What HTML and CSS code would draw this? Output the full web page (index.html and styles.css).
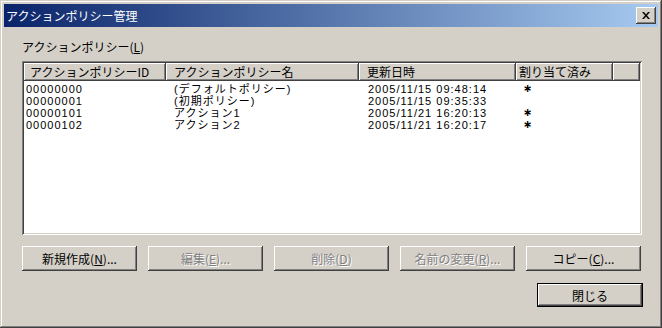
FILE: index.html
```html
<!DOCTYPE html>
<html lang="ja">
<head>
  <meta charset="UTF-8">
  <title>アクションポリシー管理</title>
  <link rel="stylesheet" href="styles.css">
</head>
<body>

  <div class="window">
    <!-- タイトルバー -->
    <div class="titlebar">
      <span class="title">アクションポリシー管理</span>
      <button class="close-btn" type="button">
        <svg width="8" height="7" viewBox="0 0 8 7">
          <path d="M0 0h2l2 2.5L6 0h2L5 3.5 8 7H6L4 4.5 2 7H0l3-3.5z" fill="#000"/>
        </svg>
      </button>
    </div>

    <div class="content">
      <div class="list-label">アクションポリシー(<u>L</u>)</div>

      <!-- 一覧 -->
      <div class="listbox">
        <div class="list-header">
          <div class="hcell">アクションポリシーID</div>
          <div class="hcell">アクションポリシー名</div>
          <div class="hcell">更新日時</div>
          <div class="hcell">割り当て済み</div>
          <div class="hcell"></div>
        </div>
        <div class="list-body">
          <div class="row">
            <span>00000000</span><span>(デフォルトポリシー)</span><span>2005/11/15 09:48:14</span><span class="mark">∗</span>
          </div>
          <div class="row">
            <span>00000001</span><span>(初期ポリシー)</span><span>2005/11/15 09:35:33</span><span class="mark"></span>
          </div>
          <div class="row">
            <span>00000101</span><span>アクション1</span><span>2005/11/21 16:20:13</span><span class="mark">∗</span>
          </div>
          <div class="row">
            <span>00000102</span><span>アクション2</span><span>2005/11/21 16:20:17</span><span class="mark">∗</span>
          </div>
        </div>
      </div>

      <!-- 操作ボタン -->
      <div class="actions">
        <button type="button" class="btn">新規作成(<u>N</u>)...</button>
        <button type="button" class="btn" disabled>編集(<u>E</u>)...</button>
        <button type="button" class="btn" disabled>削除(<u>D</u>)</button>
        <button type="button" class="btn" disabled>名前の変更(<u>R</u>)...</button>
        <button type="button" class="btn">コピー(<u>C</u>)...</button>
      </div>

      <div class="footer">
        <button type="button" class="btn btn-default">閉じる</button>
      </div>
    </div>
  </div>

</body>
</html>
```

FILE: styles.css
```css
* {
  box-sizing: border-box;
}
body {
  margin: 0;
  background-color: #d4d0c8;
  font-family: "Noto Sans CJK JP", sans-serif;
  font-size: 12px;
  color: #000;
}
.window {
  width: 662px;
  height: 328px;
  padding: 4px;
  background-color: #d4d0c8;
  box-shadow: inset -1px -1px #404040, inset 1px 1px #d4d0c8,
              inset -2px -2px #808080, inset 2px 2px #fff;
}
.titlebar {
  height: 23px;
  display: flex;
  align-items: center;
  justify-content: space-between;
  padding: 0 2px 0 2px;
  background: linear-gradient(to right, #0a246a, #a6caf0);
}
.title {
  color: #fff;
  font-size: 12px;
  line-height: 14px;
}
.close-btn {
  width: 20px;
  height: 17px;
  padding: 0;
  border: none;
  background-color: #d4d0c8;
  display: flex;
  align-items: center;
  justify-content: center;
  box-shadow: inset -1px -1px #404040, inset 1px 1px #fff,
              inset -2px -2px #808080, inset 2px 2px #d4d0c8;
}
.content {
  padding: 13px 16px 0 18px;
}
.list-label {
  line-height: 14px;
  height: 14px;
  margin-bottom: 7px;
}
.listbox {
  width: 620px;
  height: 174px;
  padding: 2px;
  background-color: #fff;
  box-shadow: inset 1px 1px #808080, inset -1px -1px #fff,
              inset 2px 2px #404040, inset -2px -2px #d4d0c8;
}
.list-header {
  display: grid;
  grid-template-columns: 142px 193px 157px 97px 1fr;
  height: 18px;
}
.hcell {
  background-color: #d4d0c8;
  line-height: 18px;
  padding-left: 6px;
  white-space: nowrap;
  overflow: hidden;
  box-shadow: inset -1px -1px #404040, inset 1px 1px #fff,
              inset -2px -2px #808080;
}
.hcell:nth-child(2),
.hcell:nth-child(3) {
  padding-left: 8px;
}
.hcell:nth-child(4) {
  padding-left: 3px;
}
.list-body {
  padding-top: 2px;
}
.row {
  display: grid;
  grid-template-columns: 142px 193px 157px 97px;
  height: 12px;
  line-height: 12px;
  font-family: "Liberation Sans", "Noto Sans CJK JP", sans-serif;
  font-size: 11px;
  letter-spacing: 1px;
}
.row span {
  padding-left: 2px;
  white-space: nowrap;
}
.row span:nth-child(2) {
  padding-left: 8px;
}
.row span:nth-child(3) {
  padding-left: 9px;
}
.row span:nth-child(4) {
  padding-left: 7px;
}
.row .mark {
  font-family: "DejaVu Sans", sans-serif;
  font-size: 11px;
  font-weight: bold;
}
.actions {
  display: flex;
  gap: 11px;
  margin-top: 11px;
  width: 620px;
}
.btn {
  width: 115px;
  height: 25px;
  padding: 0;
  border: none;
  font-family: inherit;
  font-size: 12px;
  color: #000;
  background-color: #d4d0c8;
  box-shadow: inset -1px -1px #404040, inset 1px 1px #fff,
              inset -2px -2px #808080, inset 2px 2px #d4d0c8;
}
.btn:disabled {
  color: #808080;
  text-shadow: 1px 1px #fff;
}
.footer {
  width: 621px;
  display: flex;
  justify-content: flex-end;
  margin-top: 12px;
}
.btn-default {
  width: 106px;
  height: 24px;
  border: 1px solid #000;
}
```
